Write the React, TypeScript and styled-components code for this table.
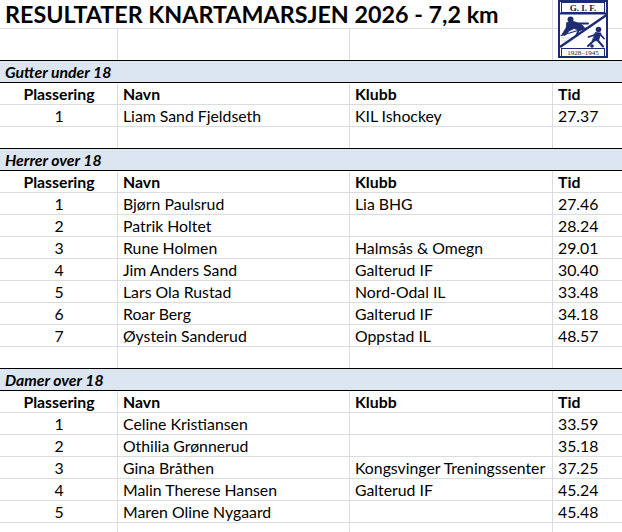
import React from 'react';
import styled, { createGlobalStyle } from 'styled-components';

type Entry = [number, string, string, string];

interface ISection {
  title: string;
  rows: Entry[];
}

const GRID = '#dadcdd';
const BAND = '#dce6f1';
const NAVY = '#1d2b73';
const COLUMNS = '118px 232px 203px 1fr';

const sections: ISection[] = [
  {
    title: 'Gutter under 18',
    rows: [[1, 'Liam Sand Fjeldseth', 'KIL Ishockey', '27.37']],
  },
  {
    title: 'Herrer over 18',
    rows: [
      [1, 'Bjørn Paulsrud', 'Lia BHG', '27.46'],
      [2, 'Patrik Holtet', '', '28.24'],
      [3, 'Rune Holmen', 'Halmsås & Omegn', '29.01'],
      [4, 'Jim Anders Sand', 'Galterud IF', '30.40'],
      [5, 'Lars Ola Rustad', 'Nord-Odal IL', '33.48'],
      [6, 'Roar Berg', 'Galterud IF', '34.18'],
      [7, 'Øystein Sanderud', 'Oppstad IL', '48.57'],
    ],
  },
  {
    title: 'Damer over 18',
    rows: [
      [1, 'Celine Kristiansen', '', '33.59'],
      [2, 'Othilia Grønnerud', '', '35.18'],
      [3, 'Gina Bråthen', 'Kongsvinger Treningssenter', '37.25'],
      [4, 'Malin Therese Hansen', 'Galterud IF', '45.24'],
      [5, 'Maren Oline Nygaard', '', '45.48'],
    ],
  },
];

const GlobalStyle = createGlobalStyle`
  html, body {
    margin: 0;
    padding: 0;
    background: #ffffff;
  }
  body {
    font-family: Lato, "Open Sans", sans-serif;
    color: #000000;
    overflow: hidden;
  }
`;

const Sheet = styled.div`
  position: relative;
  width: 622px;
  height: 532px;
  overflow: hidden;
  background: #ffffff;
`;

const Row = styled.div<{ $height?: number }>`
  display: grid;
  grid-template-columns: ${COLUMNS};
  height: ${(p) => p.$height ?? 22}px;
  box-sizing: border-box;
  border-bottom: 1px solid ${GRID};
`;

const Cell = styled.div<{ $center?: boolean; $bold?: boolean; $last?: boolean }>`
  display: flex;
  align-items: flex-end;
  justify-content: ${(p) => (p.$center ? 'center' : 'flex-start')};
  box-sizing: border-box;
  padding: 0 4px 1px 5px;
  border-right: ${(p) => (p.$last ? 'none' : `1px solid ${GRID}`)};
  font-size: 15.8px;
  line-height: 18px;
  font-weight: ${(p) => (p.$bold ? 700 : 400)};
  white-space: nowrap;
  overflow: visible;
`;

const TitleCell = styled.div`
  grid-column: span 3;
  display: flex;
  align-items: flex-end;
  border-right: 1px solid ${GRID};
  padding: 0 0 0 5px;
  font-size: 23.3px;
  line-height: 27px;
  font-weight: 700;
  white-space: nowrap;
`;

const Band = styled.div`
  display: flex;
  align-items: flex-end;
  height: 23px;
  margin-top: -1px;
  box-sizing: border-box;
  padding: 0 0 1px 5px;
  background: ${BAND};
  border-top: 1px solid #000000;
  border-bottom: 1px solid #000000;
  font-size: 15.8px;
  line-height: 18px;
  font-weight: 700;
  font-style: italic;
`;

const LogoWrap = styled.div`
  position: absolute;
  left: 558px;
  top: 0;
  width: 50px;
  height: 58px;
`;

const Logo: React.FC = () => (
  <LogoWrap>
    <svg width="50" height="58" viewBox="0 0 50 58">
      <rect x="1" y="1" width="48" height="56" fill="#fff" stroke={NAVY} strokeWidth="2" />
      <rect x="3.5" y="2.5" width="43" height="10" fill="#fff" stroke={NAVY} strokeWidth="1" />
      <text
        x="25"
        y="10.8"
        textAnchor="middle"
        fontFamily="'Liberation Serif', serif"
        fontWeight="700"
        fontSize="9"
        fill="#1a1a40"
      >
        G. I. F.
      </text>
      <line x1="1" y1="13.5" x2="49" y2="13.5" stroke={NAVY} strokeWidth="2" />
      <g stroke="#c3c8de" strokeWidth="0.7">
        <line x1="3" y1="38" x2="15" y2="38" />
        <line x1="3" y1="41" x2="11" y2="41" />
        <line x1="3" y1="44" x2="6" y2="44" />
      </g>
      <line x1="2" y1="47" x2="48.5" y2="15" stroke={NAVY} strokeWidth="2.4" />
      <g fill={NAVY} stroke={NAVY} strokeLinecap="round" strokeLinejoin="round">
        <circle cx="12.5" cy="19.5" r="3" stroke="none" />
        <path d="M9 22.5 L16 21.5 L24 25 L27 28.5 L22 30.5 L16 28.5 L11 31 L7 35.5 L4 34.5 L8 28 Z" strokeWidth="0.8" />
        <path d="M16 23.5 L30 23.5" strokeWidth="2" fill="none" />
        <path d="M3 35.5 L30 27.5" strokeWidth="1.1" fill="none" />
        <path d="M21 30 L18 36" strokeWidth="1.8" fill="none" />
        <circle cx="40.5" cy="29.5" r="2.8" stroke="none" />
        <path d="M37.5 32.5 L43 33 L40.5 40.5 L34.5 41 Z" strokeWidth="0.8" />
        <path d="M37.5 34.5 L30.5 37" strokeWidth="1.8" fill="none" />
        <path d="M42 34 L46 38.5" strokeWidth="1.8" fill="none" />
        <path d="M36 40.5 L30 46" strokeWidth="2" fill="none" />
        <path d="M39.5 40 L45 46.5" strokeWidth="2" fill="none" />
        <circle cx="34" cy="46" r="1.8" stroke="none" />
      </g>
      <rect x="3.5" y="48.5" width="43" height="8" fill="#fff" stroke={NAVY} strokeWidth="1" />
      <text
        x="25"
        y="55.4"
        textAnchor="middle"
        fontFamily="'Liberation Serif', serif"
        fontSize="7"
        fill="#1a1a40"
      >
        1928–1945
      </text>
    </svg>
  </LogoWrap>
);

const EmptyRow: React.FC<{ height?: number }> = ({ height }) => (
  <Row $height={height}>
    <Cell />
    <Cell />
    <Cell />
    <Cell $last />
  </Row>
);

const Section: React.FC<{ section: ISection }> = ({ section }) => (
  <>
    <Band>{section.title}</Band>
    <Row>
      <Cell $center $bold>
        Plassering
      </Cell>
      <Cell $bold>Navn</Cell>
      <Cell $bold>Klubb</Cell>
      <Cell $bold $last>
        Tid
      </Cell>
    </Row>
    {section.rows.map(([place, name, club, time]) => (
      <Row key={name}>
        <Cell $center>{place}</Cell>
        <Cell>{name}</Cell>
        <Cell>{club}</Cell>
        <Cell $last>{time}</Cell>
      </Row>
    ))}
    <EmptyRow />
  </>
);

const App: React.FC = () => (
  <>
    <GlobalStyle />
    <Sheet>
      <Row $height={29}>
        <TitleCell>RESULTATER KNARTAMARSJEN 2026 - 7,2 km</TitleCell>
        <Cell $last />
      </Row>
      <EmptyRow height={32} />
      {sections.map((s) => (
        <Section key={s.title} section={s} />
      ))}
      <Logo />
    </Sheet>
  </>
);

export default App;
